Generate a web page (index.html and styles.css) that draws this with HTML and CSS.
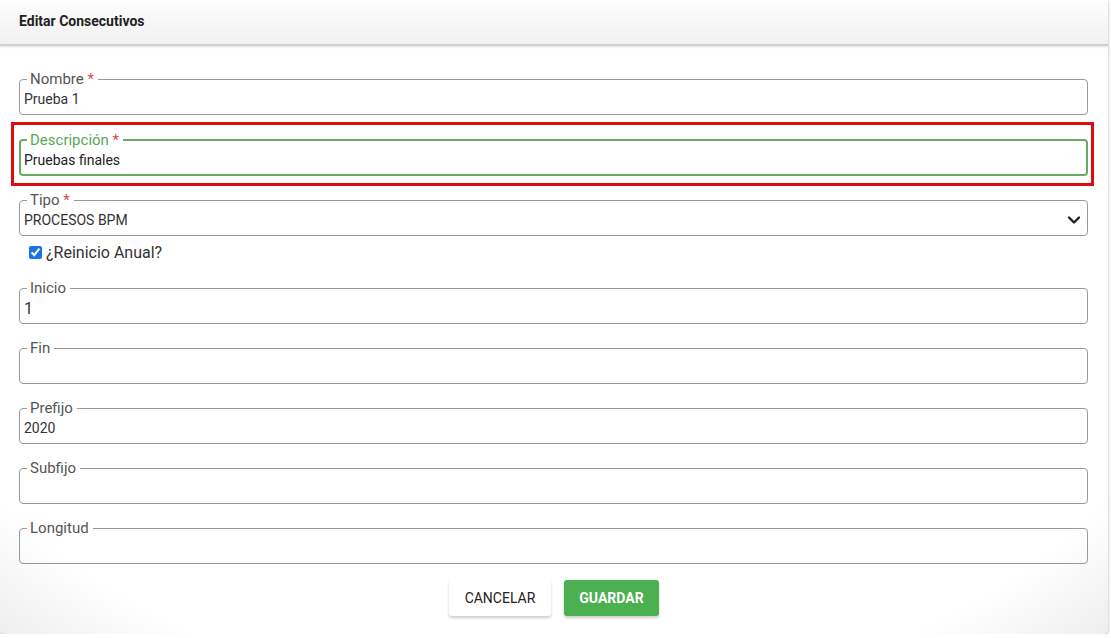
FILE: index.html
```html
<!DOCTYPE html>
<html lang="es">
<head>
    <meta charset="UTF-8">
    <meta name="viewport" content="width=device-width, initial-scale=1.0">
    <title>Editar Consecutivos</title>
    <link rel="stylesheet" href="styles.css">
</head>
<body>
    <div class="modal">
        <div class="modal-header">Editar Consecutivos</div>
        <form class="modal-body">
            <fieldset class="field">
                <legend>Nombre <span class="req">*</span></legend>
                <input type="text" value="Prueba 1">
            </fieldset>

            <div class="highlight">
                <fieldset class="field focused">
                    <legend>Descripción <span class="req">*</span></legend>
                    <input type="text" value="Pruebas finales">
                </fieldset>
            </div>

            <fieldset class="field">
                <legend>Tipo <span class="req">*</span></legend>
                <div class="select-row">
                    <select>
                        <option>PROCESOS BPM</option>
                    </select>
                    <svg class="chevron" width="14" height="10" viewBox="0 0 14 10">
                        <path d="M2 2.5 L7 7.5 L12 2.5" fill="none" stroke="#222" stroke-width="2.4" stroke-linecap="round" stroke-linejoin="round"/>
                    </svg>
                </div>
            </fieldset>

            <label class="check-row">
                <input type="checkbox" checked>
                <span>¿Reinicio Anual?</span>
            </label>

            <fieldset class="field">
                <legend>Inicio</legend>
                <input type="text" class="big" value="1">
            </fieldset>

            <fieldset class="field">
                <legend>Fin</legend>
                <input type="text" value="">
            </fieldset>

            <fieldset class="field">
                <legend>Prefijo</legend>
                <input type="text" value="2020">
            </fieldset>

            <fieldset class="field">
                <legend>Subfijo</legend>
                <input type="text" value="">
            </fieldset>

            <fieldset class="field">
                <legend>Longitud</legend>
                <input type="text" value="">
            </fieldset>

            <div class="actions">
                <button type="button" class="btn btn-cancel">Cancelar</button>
                <button type="button" class="btn btn-save">Guardar</button>
            </div>
        </form>
    </div>
</body>
</html>
```

FILE: styles.css
```css
body {
    margin: 0;
    background: #ffffff;
    font-family: Roboto, "Liberation Sans", Arial, sans-serif;
    color: #333;
}

.modal {
    width: 1108px;
    height: 634px;
    border-radius: 0 0 5px 5px;
    background: radial-gradient(ellipse at 50% 40%, #ffffff 84%, #eeeeee 100%);
    box-shadow: 0 1px 3px rgba(0, 0, 0, 0.35);
    overflow: hidden;
}

.modal-header {
    height: 46px;
    padding: 0 0 2px 19px;
    display: flex;
    align-items: center;
    font-size: 14px;
    font-weight: 700;
    color: #222;
    background: linear-gradient(to bottom, #fdfdfd, #f1f1f1);
    border-bottom: 2px solid #cfcfcf;
    box-shadow: 0 1px 2px rgba(0, 0, 0, 0.12);
    box-sizing: border-box;
}

.modal-body {
    display: flex;
    flex-direction: column;
    padding: 25px 20px 0 19px;
}

.field {
    margin: 0 0 16px 0;
    padding: 0 4px 0 4px;
    border: 1px solid #9a9a9a;
    border-radius: 4px;
    min-width: 0;
}

.field legend {
    margin-left: 3px;
    padding: 0 4px 0 3px;
    font-size: 15px;
    line-height: 16px;
    color: #555;
}

.req {
    color: #e0454f;
}

.field input[type="text"],
.field select {
    display: block;
    width: 100%;
    height: 27px;
    margin: 0;
    padding: 0 0 3px 0;
    border: none;
    background: transparent;
    font-family: Roboto, "Liberation Sans", Arial, sans-serif;
    font-size: 14px;
    color: #333;
    outline: none;
    box-sizing: border-box;
}

.field input.big {
    font-size: 16px;
}

.field.focused {
    margin: 0;
    border: 2px solid #6aaa64;
    padding: 0 3px;
}

.field.focused legend {
    color: #5aa658;
    margin-left: 3px;
}

.field.focused input {
    height: 26px;
    color: #222;
}

.highlight {
    margin: -9px -6px 6px -8px;
    padding: 7px 3px 7px 5px;
    border: 3px solid #e00b0b;
}

.select-row {
    display: flex;
    align-items: center;
}

.select-row select {
    -webkit-appearance: none;
    appearance: none;
    flex: 1;
}

.chevron {
    margin-left: -20px;
    margin-right: 2px;
    margin-top: -4px;
    pointer-events: none;
}

.check-row {
    display: flex;
    align-items: center;
    gap: 4px;
    height: 24px;
    margin: -12px 0 16px 10px;
    font-size: 16px;
    color: #333;
}

.check-row input {
    width: 13px;
    height: 13px;
    margin: 0;
    accent-color: #1a73e8;
}

.actions {
    display: flex;
    justify-content: center;
    gap: 13px;
    margin-top: 0;
    padding-left: 1px;
}

.btn {
    height: 36px;
    padding: 0 10px;
    border: none;
    border-radius: 3px;
    font-family: Roboto, "Liberation Sans", Arial, sans-serif;
    font-size: 14px;
    text-transform: uppercase;
    cursor: pointer;
    box-shadow: 0 2px 3px rgba(0, 0, 0, 0.2);
}

.btn-cancel {
    width: 102px;
    background: #ffffff;
    color: #222;
    font-weight: 400;
}

.btn-save {
    width: 95px;
    background: #4caf50;
    color: #ffffff;
    font-weight: 700;
}
```
